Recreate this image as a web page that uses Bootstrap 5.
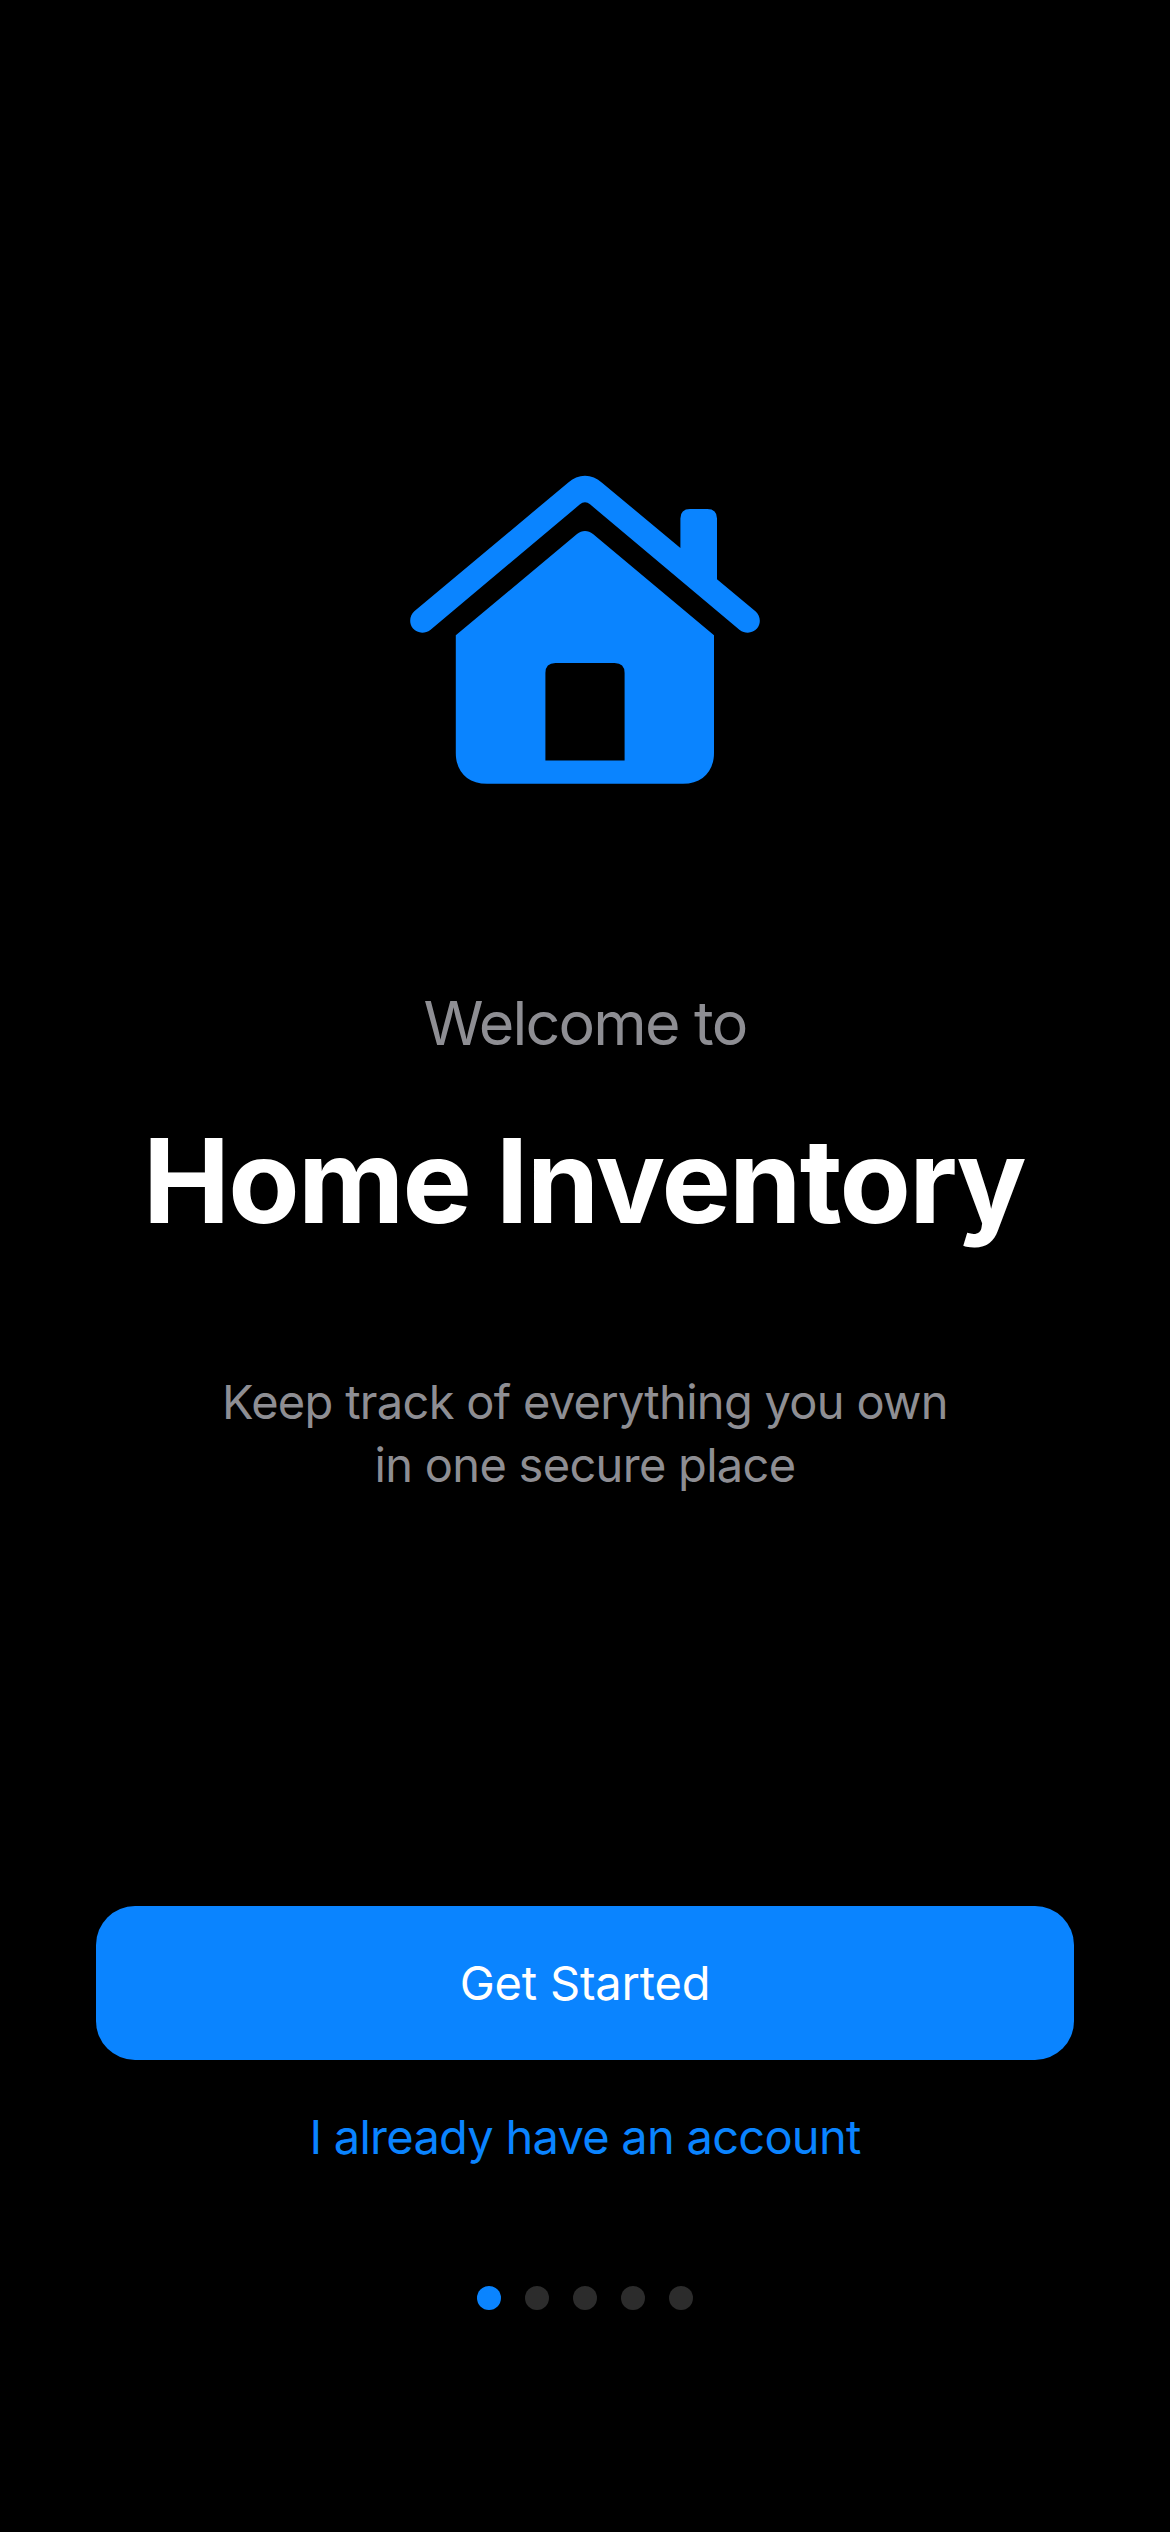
<!DOCTYPE html>
<html lang="en" data-bs-theme="dark">
<head>
<meta charset="utf-8">
<meta name="viewport" content="width=device-width, initial-scale=1">
<title>Home Inventory</title>
<link href="https://cdn.jsdelivr.net/npm/bootstrap@5.3.0/dist/css/bootstrap.min.css" rel="stylesheet">
<style>
  :root { --accent: #0a84ff; --muted: #8e8e93; }
  body { background: #000; font-family: Inter, "Liberation Sans", sans-serif; }
  .welcome-screen { height: 2532px; padding: 460px 96px 0; overflow: hidden; }
  .house-icon { width: 370px; height: 340px; fill: var(--accent); }
  .welcome-intro { margin-top: 185px; font-size: 61px; line-height: 76px; letter-spacing: -1.8px; color: var(--muted); }
  .welcome-title { margin-top: 50px; padding-right: 2px; font-size: 116.5px; line-height: 140px; letter-spacing: -1.8px; color: #fff; }
  .welcome-text { margin-top: 119px; font-size: 47px; line-height: 63px; letter-spacing: -.7px; color: var(--muted); }
  .btn-start { --bs-btn-bg: var(--accent); --bs-btn-color: #fff; --bs-btn-hover-bg: #3395ff; --bs-btn-hover-color: #fff;
    --bs-btn-border-width: 0; --bs-btn-border-radius: 39px;
    margin-top: 410px; height: 154px; font-size: 47px; letter-spacing: -.2px; }
  .btn-account { --bs-btn-color: var(--accent); --bs-btn-hover-color: #3395ff; --bs-btn-border-width: 0;
    margin-top: 45px; font-size: 47px; line-height: 63px; letter-spacing: -.74px; }
  .page-dots { margin-top: 118px; gap: 24px; }
  .page-dot { width: 24px; height: 24px; background: #2c2c2c; }
  .page-dot.active { background: var(--accent); }
</style>
</head>
<body>
<main class="welcome-screen d-flex flex-column align-items-center text-center">
  <svg class="house-icon flex-shrink-0" viewBox="0 0 370 340" aria-hidden="true">
    <path d="M14.3 151.3L168 22.7C178 13.4 192 13.4 202 22.7L280.4 88V58.5Q280.4 49 290 49H307.3Q317 49 317 58.5V119.3L355.7 151.5C360.4 155.5 361.4 163.5 357 168.6C352.5 173.6 345 173.8 339.7 170L190 44.3C187 41.6 183 41.6 180 44.3L30.3 170C25 173.8 17.5 173.6 13 168.6C8.6 163.5 9.6 155.5 14.3 151.3Z"/>
    <path fill-rule="evenodd" d="M55.8 175.3L177 74C182 69.9 188 69.9 193 74L314 175.3V293C314 311.5 302 323.8 283 323.8H87C67.5 323.8 55.8 311.5 55.8 293ZM145.4 300.4H224.6V213Q224.6 203 214.6 203H155.4Q145.4 203 145.4 213Z"/>
  </svg>
  <p class="welcome-intro mb-0">Welcome to</p>
  <h1 class="welcome-title fw-bold mb-0 text-nowrap">Home Inventory</h1>
  <p class="welcome-text mb-0">Keep track of everything you own<br>in one secure place</p>
  <button type="button" class="btn btn-start w-100 p-0 flex-shrink-0">Get Started</button>
  <button type="button" class="btn btn-account p-0">I already have an account</button>
  <div class="page-dots d-flex justify-content-center">
    <span class="page-dot rounded-circle active"></span>
    <span class="page-dot rounded-circle"></span>
    <span class="page-dot rounded-circle"></span>
    <span class="page-dot rounded-circle"></span>
    <span class="page-dot rounded-circle"></span>
  </div>
</main>
<script src="https://cdn.jsdelivr.net/npm/bootstrap@5.3.0/dist/js/bootstrap.bundle.min.js"></script>
</body>
</html>
